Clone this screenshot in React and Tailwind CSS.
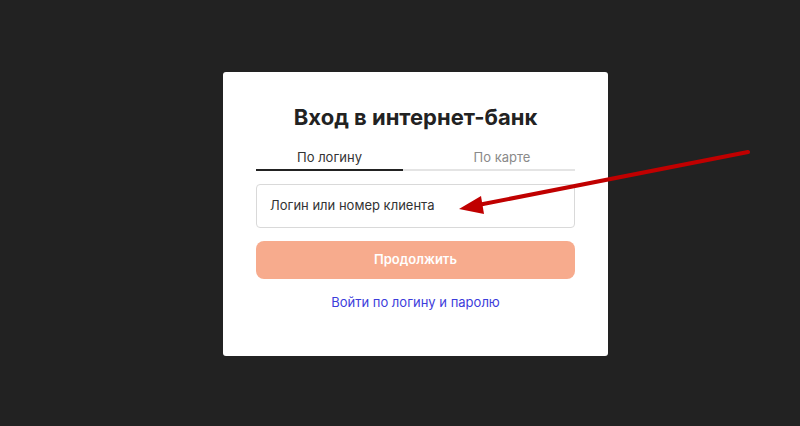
import { useState } from 'react';

// Login card for the internet bank, with a red annotation arrow on top.
export default function App() {
  const [tab, setTab] = useState('login');

  return (
    <div
      className="relative w-[800px] h-[426px] bg-[#222222] overflow-hidden"
      style={{ fontFamily: 'Inter, "Noto Sans", sans-serif' }}
    >
      <div className="pl-[223px] pt-[72px]">
        <div className="w-[385px] h-[284px] bg-white rounded-[3px] px-[33px] pt-[31px]">
          <h1 className="text-center text-[22px] leading-[28px] font-bold text-[#222]">
            Вход в интернет-банк
          </h1>

          {/* Tabs */}
          <div className="flex mt-[15px] h-[25px]">
            <button
              type="button"
              onClick={() => setTab('login')}
              className="w-[147px] flex justify-center pt-[2px] text-[13px] leading-[18px] text-[#333] border-b-2 border-[#222]"
            >
              По логину
            </button>
            <button
              type="button"
              onClick={() => setTab('card')}
              className="flex-1 flex justify-center pl-[26px] pt-[2px] text-[13px] leading-[18px] text-[#8a8a8a] border-b-2 border-[#e4e4e4]"
            >
              По карте
            </button>
          </div>

          {/* Login input */}
          <div className="mt-[13px] h-[44px] border border-[#d9d9d9] rounded-[4px] flex items-center px-[13px]">
            <span className="text-[13px] text-[#333]">Логин или номер клиента</span>
          </div>

          <button
            type="button"
            className="mt-[13px] w-full h-[38px] rounded-[8px] bg-[#f7ab8d] text-white text-[13px] font-semibold"
          >
            Продолжить
          </button>

          <div className="mt-[13px] text-center leading-[18px]">
            <a href="#" className="text-[13px] text-[#3d3ddb]">
              Войти по логину и паролю
            </a>
          </div>
        </div>
      </div>

      {/* Annotation arrow */}
      <svg
        className="absolute left-0 top-0 pointer-events-none"
        width="800"
        height="426"
        viewBox="0 0 800 426"
      >
        <line x1="748" y1="152" x2="478" y2="205" stroke="#c00000" strokeWidth="4" strokeLinecap="round" />
        <polygon points="459,209 481,196 484,214" fill="#c00000" />
      </svg>
    </div>
  );
}
